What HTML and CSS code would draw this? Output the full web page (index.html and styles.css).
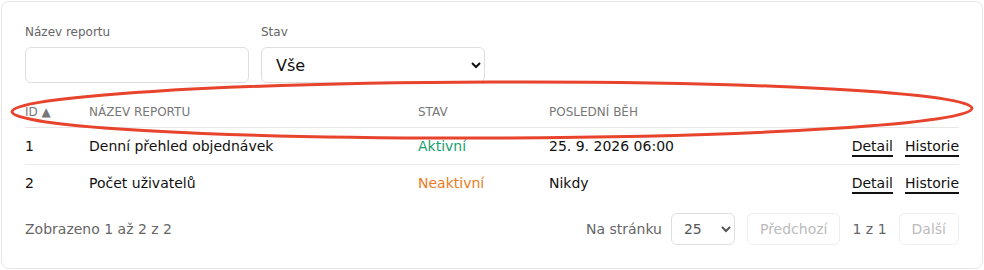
FILE: index.html
```html
<!DOCTYPE html>
<html lang="cs">
<head>
    <meta charset="UTF-8">
    <meta name="viewport" content="width=device-width, initial-scale=1.0">
    <title>Reporty</title>
    <link rel="stylesheet" href="styles.css">
</head>
<body>

<div class="card">
    <div class="filters">
        <div class="form-group">
            <label for="name">Název reportu</label>
            <input type="text" id="name">
        </div>
        <div class="form-group">
            <label for="state">Stav</label>
            <select id="state">
                <option>Vše</option>
                <option>Aktivní</option>
                <option>Neaktivní</option>
            </select>
        </div>
    </div>

    <table class="reports">
        <thead>
            <tr>
                <th class="col-id">ID <span class="sort">▲</span></th>
                <th class="col-name">Název reportu</th>
                <th class="col-state">Stav</th>
                <th class="col-run">Poslední běh</th>
                <th class="col-actions"></th>
            </tr>
        </thead>
        <tbody>
            <tr>
                <td>1</td>
                <td>Denní přehled objednávek</td>
                <td class="active">Aktivní</td>
                <td>25. 9. 2026 06:00</td>
                <td class="actions"><a href="#">Detail</a><a href="#">Historie</a></td>
            </tr>
            <tr>
                <td>2</td>
                <td>Počet uživatelů</td>
                <td class="inactive">Neaktivní</td>
                <td>Nikdy</td>
                <td class="actions"><a href="#">Detail</a><a href="#">Historie</a></td>
            </tr>
        </tbody>
    </table>

    <div class="pager">
        <span class="summary">Zobrazeno 1 až 2 z 2</span>
        <div class="pager-controls">
            <span class="muted per-page">Na stránku</span>
            <select class="page-size">
                <option>25</option>
                <option>50</option>
                <option>100</option>
            </select>
            <button class="page-btn" disabled>Předchozí</button>
            <span class="muted">1 z 1</span>
            <button class="page-btn" disabled>Další</button>
        </div>
    </div>

    <!-- annotation around the table header -->
    <svg class="mark" width="984" height="270" viewBox="0 0 984 270">
        <ellipse cx="492" cy="110" rx="480" ry="28" fill="none" stroke="#e8432d" stroke-width="3" transform="rotate(-0.2 492 110)"/>
    </svg>
</div>

</body>
</html>
```

FILE: styles.css
```css
body {
    font-family: "DejaVu Sans", sans-serif;
    font-size: 14px;
    color: #111;
    margin: 1px;
    background-color: #fff;
}

.card {
    position: relative;
    border: 1px solid #e6e6e6;
    border-radius: 8px;
    padding: 22px 23px 23px 23px;
    height: 221px;
}

.filters {
    display: flex;
    gap: 12px;
    margin-bottom: 13px;
}

.form-group label {
    display: block;
    font-size: 12px;
    color: #666;
    line-height: 16px;
    margin-bottom: 7px;
}

.form-group input,
.form-group select {
    width: 224px;
    height: 36px;
    box-sizing: border-box;
    border: 1px solid #dedede;
    border-radius: 6px;
    background-color: #fff;
    font-family: "DejaVu Sans", sans-serif;
    font-size: 16px;
    color: #111;
    padding: 0 10px;
}

.reports {
    width: 100%;
    border-collapse: collapse;
}

.reports th {
    font-size: 12px;
    font-weight: normal;
    text-transform: uppercase;
    color: #777;
    text-align: left;
    height: 31px;
    padding: 0;
    border-bottom: 1px solid #e6e6e6;
}

.sort {
    font-size: 12px;
}

.col-id { width: 64px; }
.col-name { width: 329px; }
.col-state { width: 131px; }

.reports td {
    height: 36px;
    padding: 0;
    border-bottom: 1px solid #eaeaea;
}

.reports tbody tr:last-child td {
    border-bottom: none;
}

.active { color: #1a9f6f; }
.inactive { color: #ec7a1c; }

.actions {
    text-align: right;
}

.actions a {
    color: #111;
    text-decoration: none;
    border-bottom: 2px solid #111;
    padding-bottom: 1px;
    margin-left: 12px;
}

.pager {
    display: flex;
    justify-content: space-between;
    align-items: center;
    margin-top: 12px;
}

.summary,
.muted {
    color: #666;
}

.pager-controls {
    display: flex;
    align-items: center;
    gap: 12px;
}

.per-page {
    margin-right: -3px;
}

.page-size {
    width: 64px;
    height: 32px;
    border: 1px solid #dedede;
    border-radius: 6px;
    background-color: #fff;
    font-family: "DejaVu Sans", sans-serif;
    font-size: 14px;
    color: #555;
    padding: 0 8px;
}

.page-btn {
    height: 32px;
    padding: 0 12px;
    border: 1px solid #eee;
    border-radius: 6px;
    background-color: #fff;
    font-family: "DejaVu Sans", sans-serif;
    font-size: 14px;
    color: #bbb;
}

.mark {
    position: absolute;
    left: -2px;
    top: -2px;
    pointer-events: none;
}
```
